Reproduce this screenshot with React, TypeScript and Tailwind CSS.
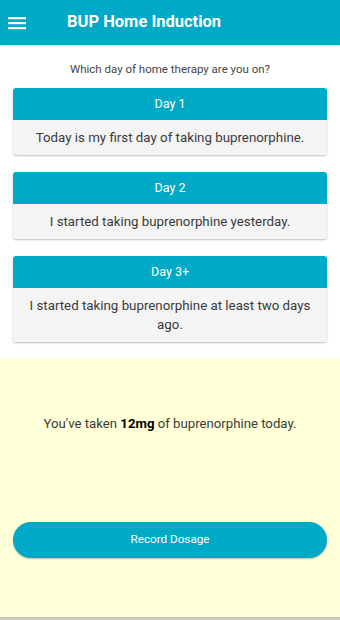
import React from 'react';

const days = [
  { label: 'Day 1', text: 'Today is my first day of taking buprenorphine.' },
  { label: 'Day 2', text: 'I started taking buprenorphine yesterday.' },
  { label: 'Day 3+', text: 'I started taking buprenorphine at least two days ago.' },
];

function DayCard({ label, text }: { label: string; text: string }) {
  return (
    <div className="rounded-[3px] overflow-hidden shadow-[0_1px_2px_rgba(0,0,0,0.25)]">
      <div className="h-[32px] bg-[#00a9c6] text-white text-[12.5px] flex items-center justify-center">
        {label}
      </div>
      <div className="bg-[#f4f4f4] text-[#3a3a3a] text-[13.3px] leading-[19px] text-center px-4 py-[8px]">
        {text}
      </div>
    </div>
  );
}

export default function App() {
  return (
    <div className="w-[340px] h-[620px] flex flex-col bg-white font-['Roboto',sans-serif]">
      {/* app bar */}
      <div className="h-[45px] bg-[#00a9c6] flex items-center shrink-0 shadow-[0_1px_2px_rgba(0,0,0,0.15)]">
        <svg className="ml-[8px]" width="18" height="14" viewBox="0 0 18 14">
          <rect x="0" y="1" width="18" height="2.2" fill="#fff" />
          <rect x="0" y="6" width="18" height="2.2" fill="#fff" />
          <rect x="0" y="11" width="18" height="2.2" fill="#fff" />
        </svg>
        <span className="ml-[41px] text-white font-bold text-[16.5px]">BUP Home Induction</span>
      </div>

      <p className="text-center text-[11.5px] leading-[17px] text-[#444] mt-[16px] mb-[10px]">
        Which day of home therapy are you on?
      </p>

      <div className="px-[13px] flex flex-col gap-[17px]">
        {days.map(d => (
          <DayCard key={d.label} label={d.label} text={d.text} />
        ))}
      </div>

      {/* dosage panel */}
      <div className="mt-[16px] flex-1 bg-[#ffffd8] flex flex-col px-[13px] border-b-[3px] border-[#c8c8c0]">
        <p className="text-center text-[13.2px] leading-[20px] text-[#3a3a3a] mt-[56px]">
          You've taken <span className="font-bold text-black">12mg</span> of buprenorphine today.
        </p>
        <button className="mt-[88px] h-[36px] rounded-full bg-[#00a9c6] text-white text-[11.7px] shadow-[0_1px_2px_rgba(0,0,0,0.25)]">
          Record Dosage
        </button>
      </div>
    </div>
  );
}
